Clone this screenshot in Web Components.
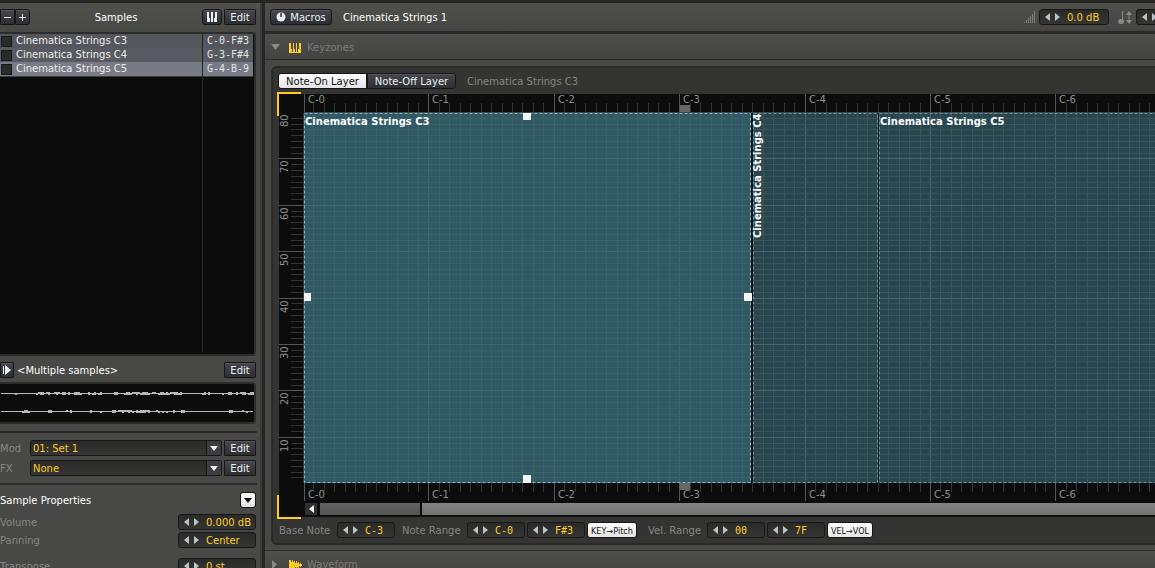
<!DOCTYPE html>
<html lang="en">
<head>
<meta charset="utf-8">
<title>Sampler – Keyzones</title>
<style>
html,body{margin:0;height:100%;overflow:hidden;background:#252523;color:#fff;font:10px/16px "DejaVu Sans",sans-serif}
</style>
</head>
<body>
<sampler-app></sampler-app>
<script>
const define = (name, html, setup) => {
  const t = document.createElement('template');
  t.innerHTML = html;
  customElements.define(name, class extends HTMLElement {
    connectedCallback() {
      if (this.shadowRoot) return;
      const r = this.attachShadow({mode: 'open'});
      r.append(t.content.cloneNode(true));
      if (setup) setup(this, r);
    }
  });
};

/* push button */
define('tool-button', `<style>
:host{display:block;flex:none;height:16px;width:32px}
button{box-sizing:border-box;display:flex;align-items:center;justify-content:center;gap:4px;width:100%;height:100%;margin:0;padding:2px 0 0;border:1px solid #161618;border-radius:var(--r,1px);background:linear-gradient(#47474b,#2e2e32);box-shadow:inset 0 1px #54545a;color:#e6f2f6;font:inherit;line-height:12px;white-space:nowrap}
:host([label]) button{padding:0}
:host([on]) button{background:linear-gradient(#fff,#e4e4e4);color:#111;box-shadow:none}
:host([narrow]) button{font-family:"DejaVu Sans Condensed","Liberation Sans Narrow","DejaVu Sans",sans-serif;font-size:9px}
</style><button type="button"><slot></slot></button>`, (h, r) => {
  if (h.hasAttribute('label')) r.querySelector('button').setAttribute('aria-label', h.getAttribute('label'));
});

/* stepper with a value */
define('value-field', `<style>
:host{display:flex;flex:none;align-items:center;min-width:0;height:16px;color:#868684}
label{flex:1;white-space:nowrap;padding-top:2px}
label:empty{display:none}
.box{box-sizing:border-box;flex:none;display:flex;align-items:center;width:var(--w,58px);height:16px;padding-left:3px;border:1px solid #181818;border-radius:3px;background:linear-gradient(#2a2a29,#353533)}
button{flex:none;width:8px;height:14px;margin:0;padding:0;border:0;background:none;display:flex;align-items:center;justify-content:center}
button+button{margin-left:2px}
svg{display:block;fill:#b8c4c8}
input{box-sizing:border-box;flex:1;min-width:0;width:0;height:14px;margin:0;padding:1px 0 0 6px;border:0;outline:0;background:none;color:#fc2;font:inherit;line-height:12px}
:host([mono]) input{font-family:"DejaVu Sans Mono",monospace}
</style><label for="v"></label><div class="box"><button type="button" aria-label="Decrease"><svg width="5" height="8"><path d="M5 0V8L0 4z"/></svg></button><button type="button" aria-label="Increase"><svg width="5" height="8"><path d="M0 0V8L5 4z"/></svg></button><input id="v" type="text"></div>`, (h, r) => {
  r.querySelector('label').textContent = h.getAttribute('label') || '';
  const i = r.querySelector('input');
  i.setAttribute('value', h.getAttribute('value'));
  if (h.hasAttribute('name')) i.setAttribute('aria-label', h.getAttribute('name'));
});

/* labelled drop-down with its edit button */
define('select-row', `<style>
:host{display:flex;flex:none;align-items:center;height:16px;color:#868684}
label{flex:0 0 30px;padding-top:2px}
.s{flex:1;position:relative;display:flex;margin-right:2px}
select{box-sizing:border-box;appearance:none;width:100%;height:16px;margin:0;padding:2px 16px 0 2px;border:1px solid #181818;border-radius:2px;background:linear-gradient(#2a2a29,#353533);color:#fc2;font:inherit;line-height:12px}
svg{position:absolute;right:1px;top:1px;pointer-events:none}
</style><label for="s"></label><div class="s"><select id="s"></select><svg width="15" height="14"><path fill="#161618" d="M0 0h1v14H0z"/><path fill="#3c3c41" d="M1 0h14v14H1z"/><path fill="#e6f2f6" d="M4 5h8L8 10z"/></svg></div><tool-button>Edit</tool-button>`, (h, r) => {
  r.querySelector('label').textContent = h.getAttribute('label');
  const o = document.createElement('option');
  o.textContent = h.getAttribute('value');
  r.querySelector('select').append(o);
});

/* list of samples */
define('sample-list', `<style>
:host{display:block;flex:none;box-sizing:border-box;height:324px;margin-right:4px;padding-right:1px;border:0 solid #2c2c2a;border-width:2px 2px 2px 0;border-radius:0 4px 4px 0;background:#0c0c0c;position:relative}
table{position:relative;width:100%;border-collapse:collapse;table-layout:fixed;border-bottom:1px solid #3c3e44}
tr{height:14px;background:#54565d}
tr:nth-child(2){background:#585a61}
tr.sel{background:#787b86}
td{padding:0;line-height:14px;height:14px;color:#eee;white-space:nowrap;overflow:hidden}
td:first-child{width:202px}
td+td{padding-left:4px;font-family:"DejaVu Sans Mono",monospace;border-left:1px solid #222;color:#e4e4e4}
label{display:flex;align-items:center;gap:4px}
input{appearance:none;box-sizing:border-box;width:11px;height:11px;margin:0 0 0 1px;background:#2a2a29;border:1px solid #1a1a1a}
:host::before{content:"";position:absolute;top:2px;bottom:2px;left:202px;width:1px;background:#2c2c2c}
</style><table><tbody></tbody></table>`, (h, r) => {
  const b = r.querySelector('tbody');
  [['Cinematica Strings C3','C-0-F#3'],['Cinematica Strings C4','G-3-F#4'],['Cinematica Strings C5','G-4-B-9']].forEach(([n, k], i) => {
    b.insertAdjacentHTML('beforeend', `<tr class="${i == 2 ? 'sel' : ''}"><td><label><input type="checkbox">${n}</label></td><td>${k}</td></tr>`);
  });
});

/* stereo overview */
define('wave-view', `<style>
:host{display:block;flex:none;box-sizing:border-box;height:42px;margin-right:4px;border:2px solid #2c2c2a;border-left:0;border-radius:0 4px 4px 0;background:#0c0c0c;overflow:hidden}
svg{display:block;width:100%;height:38px}
</style><svg viewBox="0 0 254 38" preserveAspectRatio="none" shape-rendering="crispEdges" fill="#b9b9b9"></svg>`, (h, r) => {
  let seed = 7, s = '';
  const rnd = () => (seed = seed * 16807 % 2147483647) / 2147483647;
  const bands = [[[15,25,.2],[36,68,.9],[68,104,.6],[114,124,.5],[124,150,1],[152,182,1],[182,190,.5],[200,232,.4],[232,241,.6],[242,253,1]],
                 [[18,34,.5],[38,42,.5],[48,72,.6],[75,84,.6],[90,104,.5],[112,124,.4],[124,150,.9],[156,168,.8],[171,184,.7],[229,233,.4],[242,248,.7]]];
  [9, 27].forEach((y, c) => {
    s += `<path d="M1 ${y}h252v1H1z"/>`;
    for (const [a, b, p] of bands[c]) for (let x = a; x < b; x += 2) if (rnd() < p) {
      const up = rnd() < .7 ? 1 : 0, dn = rnd() < .8 ? 1 : 0;
      s += `<path d="M${x} ${y - up}h2v${1 + up + dn}h-2z"/>`;
    }
  });
  r.querySelector('svg').innerHTML = s;
});

/* left column */
define('sample-panel', `<style>
:host{display:flex;flex-direction:column;flex:0 0 260px;overflow:hidden;background:linear-gradient(#50504c,#484845 30px,#484846);border-right:2px solid #3a3a38}
.row{display:flex;flex:none;align-items:center;height:16px;margin-right:4px}
.head{padding:6px 0 7px}
.head h2{flex:1;text-align:center;padding-top:1px}
h2{margin:0;font:inherit}
.grow{flex:1;padding-top:2px}
.sep{flex:none;height:2px;margin-right:3px;background:#2b2b29}
value-field{--w:78px;margin-right:4px}
svg{display:block}
</style>
<div class="row head"><tool-button style="width:15px" label="Remove"><svg width="9" height="9"><path fill="#e6f2f6" d="M1 4h7v1H1z"/></svg></tool-button><tool-button style="width:15px;--r:0 3px 3px 0" label="Add"><svg width="9" height="9"><path fill="#e6f2f6" d="M1 4h7v1H1zM4 1h1v7H4z"/></svg></tool-button><h2>Samples</h2><tool-button style="width:20px;margin-right:2px;--r:3px" label="Keyzones"><svg width="10" height="10"><path fill="#e6f2f6" d="M0 0h2v6h1v4H0zM4 0h1v6h1v4H4zM5 0h1v10H5zM8 0h2v10H7V6h1z"/></svg></tool-button><tool-button>Edit</tool-button></div>
<sample-list></sample-list>
<div class="row" style="padding:6px 0 4px"><tool-button style="width:14px;margin-right:3px" label="Play"><svg width="9" height="10"><path fill="#e6f2f6" d="M0 1h1v8H0zM2 0l6 5-6 5z"/></svg></tool-button><span class="grow">&lt;Multiple samples&gt;</span><tool-button>Edit</tool-button></div>
<wave-view></wave-view>
<div class="sep" style="margin-top:7px;margin-bottom:7px"></div>
<select-row style="margin-right:4px" label="Mod" value="01: Set 1"></select-row>
<select-row style="margin:4px 4px 7px 0" label="FX" value="None"></select-row>
<div class="sep"></div>
<div class="row" style="padding:7px 0 6px"><h2 class="grow">Sample Properties</h2><tool-button on style="width:16px;--r:3px" label="Options"><svg width="8" height="5"><path fill="#111" d="M0 0h8L4 5z"/></svg></tool-button></div>
<value-field label="Volume" value="0.000 dB"></value-field>
<value-field style="margin-top:2px" label="Panning" value="Center"></value-field>
<value-field style="margin-top:10px" label="Transpose" value="0 st"></value-field>`);

/* keyboard/velocity map */
define('keyzone-map', `<style>
:host{display:block;position:relative;margin-left:6px}
:host::before,:host::after{content:"";position:absolute;left:-2px;width:22px;height:22px;border:0 solid #fc2;border-left-width:2px;pointer-events:none}
:host::before{top:-2px;border-top-width:2px}
:host::after{bottom:-2px;border-bottom-width:2px}
.g{display:grid;grid-template-columns:25px 1fr;grid-template-rows:19px 370px 19px 15px;background:#0c0c0c}
svg{display:block;width:100%;height:100%;overflow:hidden}
.vel{grid-row:2;grid-column:1}
.top,.area,.bot,.bar{grid-column:2;min-width:0;overflow:hidden}
.top{grid-row:1}.area{grid-row:2}.bot{grid-row:3}
text{font:10px "DejaVu Sans",sans-serif;fill:#8e8e8c}
.area text{font-weight:bold;fill:#fff}
.bar{grid-row:4;display:flex;padding:1px 0 2px 1px}
.bar button{width:12px;height:12px;margin:0 3px 0 0;padding:0;border:0;background:#303034;display:flex;align-items:center;justify-content:center}
.track{width:100px;background:linear-gradient(#626262,#545454);margin-right:2px}
.thumb{flex:1;background:linear-gradient(#838383,#727272)}
.bar button svg{width:5px;height:8px}
</style><div class="g"><svg class="vel"></svg><div class="top"><svg></svg></div><div class="area"><svg></svg></div><div class="bot"><svg></svg></div>
<div class="bar"><button type="button" aria-label="Scroll left"><svg><path fill="#fff" d="M5 0V8L0 4z"/></svg></button><div class="track"></div><div class="thumb"></div></div></div>`, (h, r) => {
  const KEY = 125.4 / 12, q = s => r.querySelector(s);
  const kx = k => Math.max(0, Math.round(k * KEY) - 1);
  const vy = v => Math.round(370.1 - v * 2.9);
  const bar = (x, y, w, hh, c) => `<rect x="${x}" y="${y}" width="${w}" height="${hh}" fill="${c}"/>`;
  const ruler = (top, width) => {
    let s = bar(kx(36) + 1, top ? 11 : 0, 10, 7, '#666');
    for (let k = 0; k <= 120; k++) {
      const major = k % 12 == 0, x = kx(k) + 4;
      s += major ? bar(kx(k), 0, 1, 18, '#555') : bar(kx(k), top ? 9 : 0, 1, 9, '#333');
      if (major && x + 20 < width) s += `<text x="${x}" y="${top ? 9 : 15}">C-${k / 12}</text>`;
    }
    return s + (top ? bar(0, 18, 4000, 1, '#444') : '');
  };
  new ResizeObserver(() => {
    const w = q('.top').clientWidth;
    q('.top svg').innerHTML = ruler(true, w);
    q('.bot svg').innerHTML = ruler(false, w);
  }).observe(h);

  let v = bar(24, 0, 1, 370, '#333');
  for (let n = 2; n <= 128; n += 2) {
    const major = n % 16 == 0, y = vy(n);
    v += major ? bar(0, y, 25, 1, '#555') : bar(12, y, 12, 1, '#333');
    if (major) v += `<text transform="translate(9 ${y + 15}) rotate(-90)">${n / 16}0</text>`;
  }
  q('.vel').innerHTML = v;

  const zones = [[0, 447, '#315964', '#38626c', '#3d6872', '#76bcd0'], [449, 125, '#29464f', '#36555e', '#46646b', '#5f9aa8'], [575, 1000, '#29464f', '#36555e', '#46646b', '#5f9aa8']];
  let s = bar(0, 0, 1600, 370, '#141111');
  for (const [x, w, bg, minor, major, edge] of zones) {
    s += bar(x, 0, w, 370, bg);
    for (let k = 1; k <= 120; k++) if (kx(k) > x && kx(k) < x + w) s += bar(kx(k), 0, 1, 370, k % 12 ? minor : major);
    for (let n = 2; n < 128; n += 2) s += bar(x, vy(n), w, 1, n % 16 ? minor : major);
    s += `<rect x="${x + .5}" y=".5" width="${w - 1}" height="369" fill="none" stroke="${edge}" stroke-dasharray="3 2"/>`;
  }
  s += '<text x="1" y="12">Cinematica Strings C3</text><text x="576" y="12">Cinematica Strings C5</text><text transform="translate(457 125) rotate(-90)">Cinematica Strings C4</text>';
  for (const [x, y] of [[219, -1], [-1, 180], [440, 180], [219, 362]]) s += bar(x, y, 8, 8, '#f6f6f6');
  q('.area svg').innerHTML = s;
});

/* collapsible section title */
define('section-head', `<style>
:host{display:block;height:25px;background:linear-gradient(#4e4e4b,#434341);border-bottom:1px solid #2b2b29;color:#7c7c7a}
button{display:flex;align-items:center;width:100%;height:25px;margin:0;padding:2px 0 0 6px;border:0;background:none;color:inherit;font:inherit;text-align:left}
.t{flex:0 0 18px;display:flex}
.i{flex:0 0 18px;display:flex}
svg{display:block}
</style><button type="button"><span class="t"><svg width="9" height="9" fill="#8a8a88"><path/></svg></span><span class="i"><slot name="icon"></slot></span><slot></slot></button>`, (h, r) => {
  r.querySelector('path').setAttribute('d', h.hasAttribute('open') ? 'M0 1h9L4.500 7z' : 'M1 0v9l5-4.500z');
});

/* right column */
define('keyzone-editor', `<style>
:host{display:flex;flex-direction:column;flex:1;min-width:0;overflow:hidden;background:#484845;margin-left:3px}
svg{display:block;flex:none}
.top{display:flex;align-items:center;height:28px;flex:none;padding-left:5px;background:linear-gradient(#50504c,#444442);border-bottom:3px solid #2a2a28}
.title{flex:1;margin-left:11px;padding-top:2px}
.panel{margin:6px 0 5px 6px;padding:5px 0 5px;border:2px solid #292927;border-right:0;border-radius:6px 0 0 6px;background:#343432;flex:none}
.tabs{display:flex;height:16px;margin:0 0 5px 5px;color:#868684}
.tabs span{margin-left:11px;padding-top:1px}
.ctl{display:flex;align-items:center;height:16px;margin:5px 0 0 6px}
.last{flex:0 0 19px;overflow:hidden}
section-head{flex:none}
.wf{border-top:1px solid #2f2f2d}
</style>
<div class="top"><tool-button style="width:62px;--r:3px"><svg width="10" height="10" style="margin-top:-2px"><circle cx="5" cy="5" r="4.500" fill="#e6f2f6"/><path d="M5 1v4" stroke="#333" stroke-width="1.500"/></svg>Macros</tool-button><span class="title">Cinematica Strings 1</span>
<svg width="12" height="12" style="margin-right:3px" fill="#7e7e7c"><path d="M0 11h1v1H0zM2 9h1v3H2zM4 7h1v5H4zM6 5h1v7H6zM8 3h1v9H8zM10 0h1v12h-1z"/></svg>
<value-field style="--w:70px" name="Volume" value="0.0 dB"></value-field>
<svg width="15" height="13" style="margin:0 3px 0 9px" fill="#8a8a88"><ellipse cx="3" cy="10.500" rx="3" ry="2.500"/><path d="M4 0h1v11H4zM8 4l3-4 3 4h-2.500v5H14l-3 4-3-4h2.500V4z"/></svg>
<div class="last"><value-field style="--w:70px" name="Transpose" value=""></value-field></div></div>
<section-head open><svg slot="icon" width="12" height="10" fill="#fc2"><path d="M0 0h2v6h1v4H0zM4 0h1v6h1v4H4zM7 0h1v6H7zM7 6h1v4H7zM10 0h2v10H9V6h1zM3 9h6v1H3z"/></svg>Keyzones</section-head>
<div class="panel"><div class="tabs"><tool-button on style="width:89px;--r:3px 0 0 3px">Note-On Layer</tool-button><tool-button style="width:89px;--r:0 3px 3px 0">Note-Off Layer</tool-button><span>Cinematica Strings C3</span></div>
<keyzone-map></keyzone-map>
<div class="ctl"><value-field style="width:116px" mono label="Base Note" value="C-3"></value-field><value-field style="width:123px;margin-left:7px" mono label="Note Range" value="C-0"></value-field><value-field style="margin-left:2px" mono name="Note range end" value="F#3"></value-field><tool-button on narrow style="width:50px;margin-left:2px;--r:3px">KEY→Pitch</tool-button><value-field style="width:117px;margin-left:11px" mono label="Vel. Range" value="00"></value-field><value-field style="margin-left:2px" mono name="Velocity range end" value="7F"></value-field><tool-button on narrow style="width:46px;margin-left:2px;--r:3px">VEL→VOL</tool-button></div></div>
<section-head class="wf"><svg slot="icon" width="13" height="12" fill="#fc2"><path d="M0 1h2v10H0zM2 3h1v6H2zM3 1h1v10H3zM4 3h1v6H4zM5 2h1v8H5zM6 4h1v4H6zM7 2h1v8H7zM8 4h1v4H8zM9 3h1v6H9zM10 5h1v2h-1zM11 4h1v4h-1zM12 5h1v2h-1z"/></svg>Waveform</section-head>`);

define('sampler-app', `<style>:host{display:flex;box-sizing:border-box;height:100vh;padding-top:3px;overflow:hidden}</style><sample-panel></sample-panel><keyzone-editor></keyzone-editor>`);
</script>
</body>
</html>
